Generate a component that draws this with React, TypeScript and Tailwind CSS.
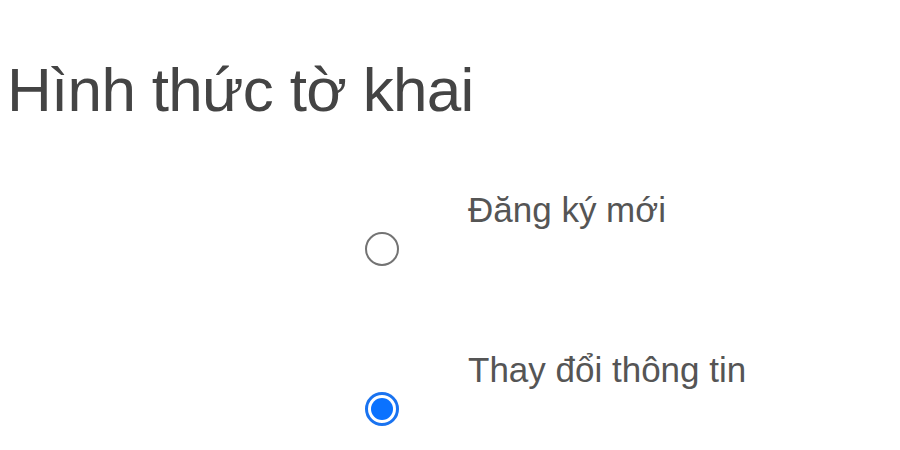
import React from 'react';

const Radio = ({checked}: {checked?: boolean}) => (
    checked ? (
        <span className="block w-[34px] h-[34px] rounded-full border-[3px] border-[#1a73f0] bg-white p-[3px]">
            <span className="block w-full h-full rounded-full bg-[#0a72ff]"/>
        </span>
    ) : (
        <span className="block w-[34px] h-[34px] rounded-full border-[2.5px] border-[#737373] bg-white"/>
    )
);

const Option = ({label, checked}: {label: string; checked?: boolean}) => (
    <div className="flex items-start h-[160px]">
        <div className="w-[365px] shrink-0"/>
        <div className="mt-[40px]">
            <Radio checked={checked}/>
        </div>
        <div className="ml-[69px] text-[35px] leading-none text-[#555555]">{label}</div>
    </div>
);

const App = () => {
    return (
        <div className="w-[900px] h-[450px] bg-white overflow-hidden font-['Liberation_Sans',Arial,sans-serif]">
            <h1 className="pl-[7px] pt-[59px] text-[62px] leading-none tracking-[-0.7px] text-[#444444] font-normal">Hình thức tờ khai</h1>
            <div className="mt-[71px]">
                <Option label="Đăng ký mới"/>
                <Option label="Thay đổi thông tin" checked/>
            </div>
        </div>
    );
};

export default App;
